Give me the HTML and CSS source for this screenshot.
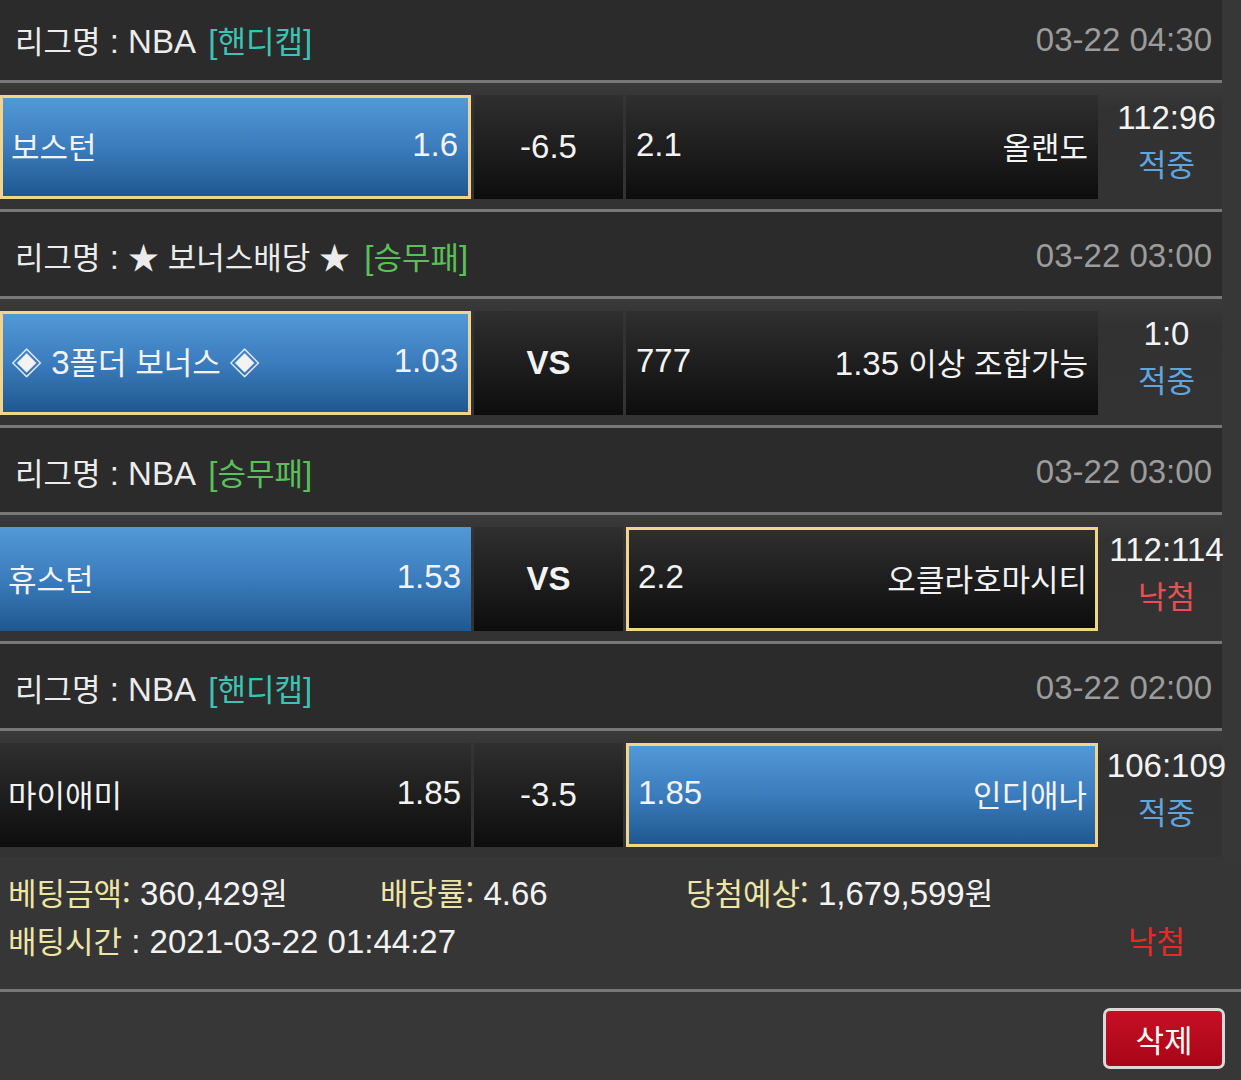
FILE: index.html
```html
<!DOCTYPE html>
<html lang="ko">
<head>
<meta charset="utf-8">
<title>베팅내역</title>
<link rel="stylesheet" href="styles.css">
</head>
<body>
<div class="games">
  <section class="game">
    <div class="head">
      <div class="league"><span class="k">리그명</span> : NBA <span class="tag handi">[<span class="k">핸디캡</span>]</span></div>
      <div class="date">03-22 04:30</div>
    </div>
    <div class="row">
      <div class="cell team home win pick"><span class="k">보스턴</span><span>1.6</span></div>
      <div class="cell mid">-6.5</div>
      <div class="cell team away"><span>2.1</span><span class="k">올랜도</span></div>
      <div class="score"><div>112:96</div><div class="k hit">적중</div></div>
    </div>
  </section>

  <section class="game">
    <div class="head">
      <div class="league"><span class="k">리그명</span> : <span class="k">★ 보너스배당 ★</span> <span class="tag wdl">[<span class="k">승무패</span>]</span></div>
      <div class="date">03-22 03:00</div>
    </div>
    <div class="row">
      <div class="cell team home win pick"><span><span class="k">◈</span> 3<span class="k">폴더 보너스 ◈</span></span><span>1.03</span></div>
      <div class="cell mid vs">VS</div>
      <div class="cell team away"><span>777</span><span>1.35 <span class="k">이상 조합가능</span></span></div>
      <div class="score"><div>1:0</div><div class="k hit">적중</div></div>
    </div>
  </section>

  <section class="game">
    <div class="head">
      <div class="league"><span class="k">리그명</span> : NBA <span class="tag wdl">[<span class="k">승무패</span>]</span></div>
      <div class="date">03-22 03:00</div>
    </div>
    <div class="row">
      <div class="cell team home win"><span class="k">휴스턴</span><span>1.53</span></div>
      <div class="cell mid vs">VS</div>
      <div class="cell team away pick"><span>2.2</span><span class="k">오클라호마시티</span></div>
      <div class="score"><div>112:114</div><div class="k miss">낙첨</div></div>
    </div>
  </section>

  <section class="game last">
    <div class="head">
      <div class="league"><span class="k">리그명</span> : NBA <span class="tag handi">[<span class="k">핸디캡</span>]</span></div>
      <div class="date">03-22 02:00</div>
    </div>
    <div class="row">
      <div class="cell team home"><span class="k">마이애미</span><span>1.85</span></div>
      <div class="cell mid">-3.5</div>
      <div class="cell team away win pick"><span>1.85</span><span class="k">인디애나</span></div>
      <div class="score"><div>106:109</div><div class="k hit">적중</div></div>
    </div>
  </section>
</div>

<div class="info">
  <div class="line first">
    <div><span class="label k">베팅금액:</span> 360,429<span class="k">원</span></div>
    <div><span class="label k">배당률:</span> 4.66</div>
    <div><span class="label k">당첨예상:</span> 1,679,599<span class="k">원</span></div>
  </div>
  <div class="line second">
    <div><span class="label k">배팅시간</span> : 2021-03-22 01:44:27</div>
    <div class="result k">낙첨</div>
  </div>
</div>

<div class="actions">
  <button class="delete k" type="button">삭제</button>
</div>
</body>
</html>
```

FILE: styles.css
```css
* {
  box-sizing: border-box;
}

html, body {
  margin: 0;
  padding: 0;
}

body {
  width: 1241px;
  height: 1080px;
  overflow: hidden;
  background: #373737;
  color: #f3f3f3;
  font-family: "Liberation Sans", "Noto Sans CJK KR", sans-serif;
  font-size: 33px;
}

.k {
  font-family: "Noto Sans CJK KR", "Liberation Sans", sans-serif;
  font-size: 31px;
}

.k .k {
  font-size: inherit;
}

.games {
  width: 1222px;
  margin-top: -4px;
}

.head {
  height: 87px;
  padding: 3px 10px 0 15px;
  background: #2b2b2b;
  border-bottom: 3px solid #787878;
  display: flex;
  align-items: center;
  justify-content: space-between;
  white-space: nowrap;
}

.league {
  color: #ececec;
}

.tag {
  margin-left: 5px;
}

.tag.handi {
  color: #3fc1b4;
}

.tag.wdl {
  color: #5bbf5a;
}

.date {
  color: #9c9c9c;
}

.row {
  height: 129px;
  padding: 12px 0 10px 0;
  background: linear-gradient(#3a3a3a, #323232 20%, #333333);
  border-bottom: 3px solid #787878;
  display: flex;
  align-items: stretch;
}

.game.last .row {
  height: 126px;
  border-bottom: none;
}

.cell {
  height: 104px;
  padding-bottom: 4px;
  background: linear-gradient(#2f2f2f, #0d0d0d);
  display: flex;
  align-items: center;
  white-space: nowrap;
  flex-shrink: 0;
}

.cell.win {
  background: linear-gradient(#5299d6, #3b7cbd 50%, #1f5890);
}

.cell.pick {
  border: 3px solid #f1d58d;
}

.team {
  justify-content: space-between;
}

.home {
  width: 471px;
  padding-left: 8px;
  padding-right: 10px;
}

.mid {
  width: 149px;
  margin-left: 3px;
  justify-content: center;
  padding-bottom: 0;
}

.mid.vs {
  font-weight: bold;
}

.away {
  width: 472px;
  margin-left: 3px;
  padding-left: 10px;
  padding-right: 10px;
}

.away.pick {
  padding-left: 9px;
  padding-right: 8px;
}

.score {
  width: 137px;
  flex-shrink: 0;
  align-self: flex-start;
  text-align: center;
  line-height: 45px;
  white-space: nowrap;
}

.hit {
  color: #5ea6e1;
}

.miss {
  color: #e25353;
}

.info {
  height: 135px;
  padding: 12px 0 0 8px;
  border-bottom: 3px solid #787878;
  background: #363636;
}

.line {
  line-height: 46px;
  white-space: nowrap;
}

.line.first {
  display: grid;
  grid-template-columns: 372px 306px auto;
}

.line.second {
  display: flex;
  justify-content: space-between;
  padding-right: 56px;
}

.label {
  color: #efe5a6;
}

.result {
  color: #e42b2b;
}

.actions {
  display: flex;
  justify-content: flex-end;
  padding: 16px 16px 0 0;
}

.delete {
  width: 122px;
  height: 61px;
  border: 3px solid #dadada;
  border-radius: 7px;
  background: linear-gradient(#c70f24, #a70617);
  color: #ffffff;
  display: flex;
  align-items: center;
  justify-content: center;
  padding: 0;
  cursor: pointer;
}
```
